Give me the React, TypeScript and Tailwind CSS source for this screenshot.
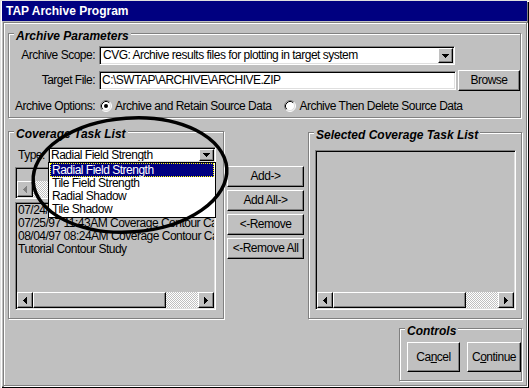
import React from "react";

const SUNKEN =
  "border border-t-[#808080] border-l-[#808080] border-r-white border-b-white shadow-[inset_1px_1px_0_#000,inset_-1px_-1px_0_#dfdfdf] p-[1px]";
const RAISED =
  "border border-t-white border-l-white border-r-black border-b-black shadow-[inset_-1px_-1px_0_#808080]";
const ETCHED = "border border-[#808080] shadow-[inset_1px_1px_0_#fff,1px_1px_0_#fff]";
const CHECKER =
  "bg-[image:repeating-conic-gradient(#ffffff_0_25%,#c0c0c0_0_50%)] bg-[length:2px_2px]";

function DownArrow() {
  return (
    <svg width="7" height="4" viewBox="0 0 7 4" shapeRendering="crispEdges">
      <rect x="0" y="0" width="7" height="1" fill="#000" />
      <rect x="1" y="1" width="5" height="1" fill="#000" />
      <rect x="2" y="2" width="3" height="1" fill="#000" />
      <rect x="3" y="3" width="1" height="1" fill="#000" />
    </svg>
  );
}

function LeftArrow({ color = "#000" }: { color?: string }) {
  return (
    <svg width="4" height="7" viewBox="0 0 4 7" shapeRendering="crispEdges">
      <rect x="3" y="0" width="1" height="7" fill={color} />
      <rect x="2" y="1" width="1" height="5" fill={color} />
      <rect x="1" y="2" width="1" height="3" fill={color} />
      <rect x="0" y="3" width="1" height="1" fill={color} />
    </svg>
  );
}

function RightArrow() {
  return (
    <svg width="4" height="7" viewBox="0 0 4 7" shapeRendering="crispEdges">
      <rect x="0" y="0" width="1" height="7" fill="#000" />
      <rect x="1" y="1" width="1" height="5" fill="#000" />
      <rect x="2" y="2" width="1" height="3" fill="#000" />
      <rect x="3" y="3" width="1" height="1" fill="#000" />
    </svg>
  );
}

function Radio({ checked }: { checked?: boolean }) {
  return (
    <svg width="12" height="12" viewBox="0 0 12 12" className="shrink-0">
      <circle cx="6" cy="6" r="5" fill="#fff" />
      <path d="M2.11 9.89 A5.5 5.5 0 0 1 9.89 2.11" stroke="#808080" strokeWidth="1" fill="none" />
      <path d="M9.89 2.11 A5.5 5.5 0 0 1 2.11 9.89" stroke="#fff" strokeWidth="1" fill="none" />
      <path d="M2.82 9.18 A4.5 4.5 0 0 1 9.18 2.82" stroke="#000" strokeWidth="1" fill="none" />
      <path d="M9.18 2.82 A4.5 4.5 0 0 1 2.82 9.18" stroke="#dfdfdf" strokeWidth="1" fill="none" />
      {checked && <circle cx="6" cy="6" r="2" fill="#000" />}
    </svg>
  );
}

function GroupBox({
  label,
  className,
  children,
}: {
  label: string;
  className: string;
  children?: React.ReactNode;
}) {
  return (
    <div className={`${ETCHED} flex flex-col shrink-0 ${className}`}>
      <div className="-mt-[5px] ml-[5px] w-fit px-[2px] bg-[#c0c0c0] text-[12px] leading-[14px] font-bold italic tracking-normal">
        {label}
      </div>
      {children}
    </div>
  );
}

function HScroll() {
  return (
    <div className="flex h-[16px] w-full shrink-0 mt-auto">
      <div className={`${RAISED} w-[16px] h-[16px] bg-[#c0c0c0] flex items-center justify-center`}>
        <LeftArrow />
      </div>
      <div className={`${RAISED} w-[133px] h-[16px] bg-[#c0c0c0]`} />
      <div className={`flex-1 h-[16px] ${CHECKER}`} />
      <div className={`${RAISED} w-[16px] h-[16px] bg-[#c0c0c0] flex items-center justify-center`}>
        <RightArrow />
      </div>
    </div>
  );
}

function Button({ className, children }: { className: string; children: React.ReactNode }) {
  return (
    <div className={`${RAISED} bg-[#c0c0c0] flex items-center justify-center whitespace-nowrap ${className}`}>
      {children}
    </div>
  );
}

export default function App() {
  return (
    <div className="relative w-[529px] h-[388px] bg-[#c0c0c0] overflow-hidden font-['Liberation_Sans',Arial,sans-serif] text-[12px] leading-[13px] tracking-[-0.5px] text-black shadow-[inset_1px_1px_0_#dfdfdf,inset_2px_2px_0_#fff,inset_-1px_-1px_0_#000,inset_-2px_-2px_0_#808080]">
      {/* Title bar */}
      <div className="mx-[2px] mt-[1px] h-[20px] bg-[#000080] text-white font-bold text-[12px] tracking-normal pl-[4px] flex items-center">
        TAP Archive Program
      </div>

      {/* Body frame */}
      <div className={`${ETCHED} ml-[3px] mt-[1px] w-[524px] h-[364px] flex flex-col pl-[4px]`}>
        <GroupBox label="Archive Parameters" className="mt-[10px] w-[513px] h-[85px]">
          <div className="mt-[3px] flex items-center h-[19px]">
            <div className="w-[86px] text-right">Archive Scope:</div>
            <div className={`${SUNKEN} ml-[4px] w-[356px] h-[19px] bg-white flex items-stretch`}>
              <div className="flex-1 pl-[2px] flex items-center whitespace-nowrap overflow-hidden">
                CVG: Archive results files for plotting in target system
              </div>
              <div className={`${RAISED} w-[15px] bg-[#c0c0c0] flex items-center justify-center`}>
                <DownArrow />
              </div>
            </div>
          </div>
          <div className="mt-[5px] flex items-center h-[21px]">
            <div className="w-[86px] text-right">Target File:</div>
            <div className={`${SUNKEN} ml-[4px] w-[357px] h-[19px] bg-white flex items-center pl-[2px] whitespace-nowrap overflow-hidden`}>
              C:\SWTAP\ARCHIVE\ARCHIVE.ZIP
            </div>
            <Button className="ml-[2px] w-[62px] h-[21px]">Browse</Button>
          </div>
          <div className="mt-[8px] flex items-center h-[14px]">
            <div className="w-[86px] text-right">Archive Options:</div>
            <div className="ml-[5px]">
              <Radio checked />
            </div>
            <div className="ml-[3px] whitespace-nowrap">Archive and Retain Source Data</div>
            <div className="ml-[13px]">
              <Radio />
            </div>
            <div className="ml-[3px] whitespace-nowrap">Archive Then Delete Source Data</div>
          </div>
        </GroupBox>

        <div className="mt-[13px] flex items-start">
          <GroupBox label="Coverage Task List" className="w-[216px] h-[188px]">
            <div className="mt-[6px] ml-[9px] flex items-center h-[16px]">
              <div className="w-[30px]">Type:</div>
              <div className={`${SUNKEN} relative w-[168px] h-[16px] bg-white flex items-stretch`}>
                <div className="flex-1 pl-[1px] flex items-center whitespace-nowrap overflow-hidden">
                  Radial Field Strength
                </div>
                <div className={`${RAISED} w-[15px] bg-[#c0c0c0] flex items-center justify-center`}>
                  <DownArrow />
                </div>
                {/* open dropdown list */}
                <div className="absolute left-[-1px] top-[14px] z-10 w-[168px] h-[56px] border border-black bg-white flex flex-col">
                  <div className="h-[14px] mx-[1px] bg-[#000080] text-white border border-dotted border-[#ffff00] pl-[1px] flex items-center whitespace-nowrap">
                    Radial Field Strength
                  </div>
                  <div className="h-[13px] pl-[3px] flex items-center whitespace-nowrap">Tile Field Strength</div>
                  <div className="h-[13px] pl-[3px] flex items-center whitespace-nowrap">Radial Shadow</div>
                  <div className="h-[13px] pl-[3px] flex items-center whitespace-nowrap">Tile Shadow</div>
                </div>
              </div>
            </div>

            <div className={`${SUNKEN} mt-[4px] ml-[6px] w-[201px] h-[32px] bg-[#c0c0c0] flex flex-col`}>
              <div className="flex h-[16px] w-full mt-auto">
                <div className={`${RAISED} w-[16px] h-[16px] bg-[#c0c0c0] flex items-center justify-center`}>
                  <LeftArrow color="#808080" />
                </div>
                <div className={`flex-1 h-[16px] ${CHECKER}`} />
              </div>
            </div>

            <div className={`${SUNKEN} mt-[3px] ml-[6px] w-[201px] h-[108px] bg-[#c0c0c0] flex flex-col`}>
              <div className="flex flex-col whitespace-nowrap overflow-hidden pl-[1px]">
                <div className="h-[13px]">07/24/97 10:15AM Coverage Contour Calculation</div>
                <div className="h-[13px]">07/25/97 11:43AM Coverage Contour Calculation</div>
                <div className="h-[13px]">08/04/97 08:24AM Coverage Contour Calculation</div>
                <div className="h-[13px]">Tutorial Contour Study</div>
              </div>
              <HScroll />
            </div>
          </GroupBox>

          <div className="ml-[3px] mt-[35px] flex flex-col gap-[3px] w-[77px] shrink-0">
            <Button className="h-[21px] w-full">Add-&gt;</Button>
            <Button className="h-[21px] w-full">Add All-&gt;</Button>
            <Button className="h-[21px] w-full">&lt;-Remove</Button>
            <Button className="h-[21px] w-full">&lt;-Remove All</Button>
          </div>

          <GroupBox label="Selected Coverage Task List" className="ml-[4px] mt-[1px] w-[214px] h-[187px]">
            <div className={`${SUNKEN} mt-[8px] ml-[6px] w-[201px] h-[160px] bg-[#c0c0c0] flex flex-col`}>
              <HScroll />
            </div>
          </GroupBox>
        </div>

        <GroupBox label="Controls" className="mt-[9px] ml-[391px] w-[123px] h-[53px]">
          <div className="mt-[4px] ml-[7px] flex">
            <Button className="w-[53px] h-[30px]">
              Ca<span className="underline">n</span>cel
            </Button>
            <Button className="ml-[7px] w-[54px] h-[30px]">
              C<span className="underline">o</span>ntinue
            </Button>
          </div>
        </GroupBox>
      </div>

      {/* Hand-drawn annotation ellipse */}
      <svg
        className="absolute inset-0 pointer-events-none z-20"
        width="529"
        height="388"
        viewBox="0 0 529 388"
      >
        <ellipse
          cx="130"
          cy="175"
          rx="97"
          ry="57"
          transform="rotate(-4 130 175)"
          fill="none"
          stroke="#000"
          strokeWidth="3.5"
        />
      </svg>
    </div>
  );
}
